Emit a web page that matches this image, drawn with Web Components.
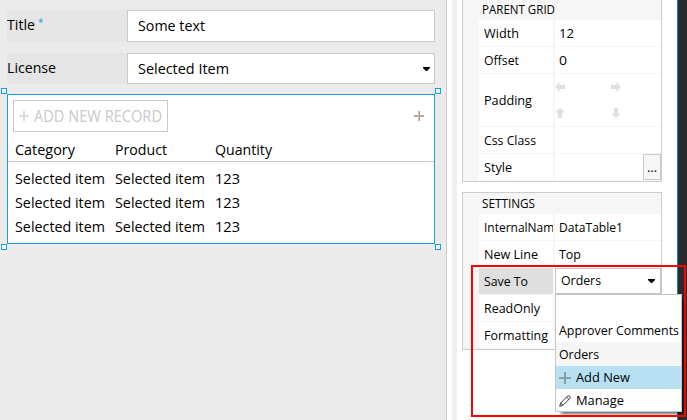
<!DOCTYPE html>
<html lang="en"><head><meta charset="utf-8"><title>Form designer</title>
<style>
html,body{margin:0;height:100%;overflow:hidden}
body{font-family:"Open Sans","Noto Sans",sans-serif;color:#000;background:#fff}
</style></head><body>
<designer-app></designer-app>
<script>
const make=(name,html,setup)=>customElements.define(name,class extends HTMLElement{
  connectedCallback(){
    if(this.shadowRoot)return;
    this.attachShadow({mode:'open'}).innerHTML=html;
    if(setup)setup(this,this.shadowRoot);
  }
});

make('ui-icon',`<style>:host{display:block;flex:none}div{display:block}svg{display:block;overflow:visible}</style><div></div>`,(el,r)=>{
  const arrow=d=>`<svg width="10" height="10" viewBox="0 0 10 10"><path transform="rotate(${d} 5 5)" fill="#dfdfdf" d="M0 5 4.5 0V3H10V7H4.5V10Z"/></svg>`;
  r.querySelector('div').innerHTML={
    caret:`<svg width="7" height="4" viewBox="0 0 7 4"><path d="M0 0H7V1L4 4H3L0 1Z"/></svg>`,
    left:arrow(0),up:arrow(90),right:arrow(180),down:arrow(270),
    plusPale:`<svg width="10" height="10"><path d="M0 5H10M5 0V10" stroke="#d2d2da" stroke-width="1.6"/></svg>`,
    plus:`<svg width="10" height="10"><path d="M0 5H10" stroke="#aaa" stroke-width="2"/><path d="M4.5 0V10" stroke="#ffb861"/><path d="M5.5 0V10" stroke="#8aa6c8"/></svg>`,
    plusMenu:`<svg width="12" height="12"><path d="M0 6H12" stroke="#71858e" stroke-width="1.4"/><path d="M5.5 0V12" stroke="#a39a83"/><path d="M6.5 0V12" stroke="#6e9fc4"/></svg>`,
    pencil:`<svg width="12" height="12" viewBox="0 0 12 12" fill="none" stroke="#3b3540" stroke-width="1"><path d="M.7 11.3 1.6 8 8.5 1.1Q9.5.2 10.7 1.2 11.8 2.4 10.9 3.4L4 10.3ZM1.6 8 4 10.3M7.5 2.1 9.9 4.4"/></svg>`
  }[el.getAttribute('name')];
});

/* Label condensed horizontally to the width in its "w" attribute */
make('fit-text',`<style>:host{display:block;flex:none;white-space:nowrap}span{display:inline-block;transform-origin:0 50%}</style><span><slot></slot></span>`,(el,r)=>{
  const s=r.querySelector('span'),w=+el.getAttribute('w');
  el.style.width=w+'px';
  s.style.transform=`scaleX(${w/s.getBoundingClientRect().width})`;
});

make('form-field',`<style>
:host{display:grid;grid-template-columns:120px 308px;height:var(--h);font-size:15px}
.l{background:#e5e5e5;display:flex;line-height:var(--ll)}
.i{box-sizing:border-box;border:1px solid #c9c9c9;background:#fff;display:flex;justify-content:space-between;align-items:center;padding:0 4px 0 10px;line-height:var(--il)}
</style><div class="l"><slot name="label"></slot></div><div class="i"><slot></slot><slot name="end"></slot></div>`);

make('data-grid',`<style>
:host{display:block;position:relative;box-sizing:border-box;height:150px;border:1px solid #16a0dc;background:#fff;font-size:15px}
.h{position:absolute;width:4px;height:4px;border:1px solid #16a0dc;background:#f4f4f4}
.bar{display:flex;justify-content:space-between;align-items:center;padding:5px 10px 0 5px}
button{all:unset;box-sizing:border-box;width:155px;height:32px;border:1px solid #c9c9c9;display:flex;align-items:center;gap:5px;padding-left:5px;color:#c9c9c9;line-height:30px;font-size:15.5px}
.r{display:grid;grid-template-columns:100px 100px 1fr;padding-left:7px;line-height:24px}
.head{height:29px;line-height:34px;border-bottom:1px solid #c9c9c9;margin-bottom:4px}
</style>
<div class="bar"><button><ui-icon name="plusPale"></ui-icon><fit-text w="128">ADD NEW RECORD</fit-text></button><ui-icon name="plus"></ui-icon></div>
<div class="r head"><fit-text w="60">Category</fit-text><fit-text w="52">Product</fit-text><fit-text w="57">Quantity</fit-text></div>
<div id="rows"></div>
<i class="h" style="left:-7px;top:-7px"></i><i class="h" style="right:-7px;top:-7px"></i><i class="h" style="left:-7px;bottom:-7px"></i><i class="h" style="right:-7px;bottom:-7px"></i>`,(el,r)=>{
  r.getElementById('rows').innerHTML='<div class="r"><fit-text w="90">Selected item</fit-text><fit-text w="90">Selected item</fit-text><fit-text w="25">123</fit-text></div>'.repeat(3);
});

make('prop-group',`<style>
:host{display:block;box-sizing:border-box;width:200px;border:1px solid #cdcdcd;background:#f6f6f6;padding-left:16px}
header{height:21px;line-height:21px;padding-left:3px;font-size:12.5px;display:flex}
</style><header><slot name="title"></slot></header><slot></slot>`);

make('prop-row',`<style>
:host{display:grid;grid-template-columns:74px 107px;column-gap:1px;height:26px;padding-bottom:1px;font-size:13px;line-height:26px}
:host([tall]){height:52px;line-height:52px}
.l{background:#fff;padding-left:5px;overflow:hidden;display:flex}
:host([active]) .l{background:#dfdfdf}
.v{background:#fff;margin-left:1px;padding-left:4px;display:flex}
:host([flush]) .v{padding-left:0}
:host([active]) .v{margin-left:0}
</style><div class="l"><slot name="label"></slot></div><div class="v"><slot></slot></div>`);

make('padding-arrows',`<style>:host{display:grid;grid-template-columns:56px 10px;row-gap:16px;padding:8px 0 0 0;align-content:start}</style>
<ui-icon name="left"></ui-icon><ui-icon name="right"></ui-icon><ui-icon name="up"></ui-icon><ui-icon name="down"></ui-icon>`);

make('more-button',`<style>:host{display:block;box-sizing:border-box;width:18px;height:26px;margin-left:88px;border:1px solid #c9c9c9;background:#f6f6f6;text-align:center;line-height:24px}</style><slot></slot>`);

make('drop-select',`<style>
:host{display:block;position:relative;width:107px;height:26px;margin-left:1px}
.box{box-sizing:border-box;width:106px;height:26px;border:1px solid #c4c4c4;background:#fff;display:flex;align-items:center;justify-content:space-between;padding:0 5px;line-height:23px}
.box fit-text{margin-top:-1px}
.menu{position:absolute;z-index:1;left:0;top:26px;width:127px;height:118px;box-sizing:border-box;border:1px solid #c6c6c6;background:#fff;box-shadow:4px 4px 3px -2px rgba(0,0,0,.6);line-height:23px}
.o{height:23px;padding-left:3px;display:flex;gap:5px;align-items:center}
.o.sel{height:24px;line-height:24px;background:#f5f5f5}.o.hot{background:#b7e0f2}
</style>
<div class="box"><fit-text w="40">Orders</fit-text><ui-icon name="caret"></ui-icon></div>
<div class="menu"><div class="o"></div><div class="o" style="height:24px"><fit-text w="120">Approver Comments</fit-text></div><div class="o sel"><fit-text w="40">Orders</fit-text></div><div class="o hot"><ui-icon name="plusMenu"></ui-icon><fit-text w="54">Add New</fit-text></div><div class="o"><ui-icon name="pencil"></ui-icon><fit-text w="48">Manage</fit-text></div></div>`);

make('designer-app',`<style>
:host{display:grid;grid-template-columns:447px 5px 5px 220px 10px;height:420px;position:relative;overflow:hidden}
.canvas{box-sizing:border-box;background:#ebebeb;border-right:1px solid #ccc;padding:10px 11px 0 7px;display:flex;flex-direction:column;gap:11px}
.split{background:#f0f0f0}
.side{padding-left:5px;display:flex;flex-direction:column;gap:10px}
.edge{background:#2b2b2b;border-left:1px solid #2277bd}
.mark{position:absolute;z-index:2;box-sizing:border-box;left:471px;top:265px;width:215px;height:152px;border:2px solid #f00}
sup{font-size:10px;color:#2b9bd8;line-height:24px;margin:0 0 0 3px}
</style>
<div class="canvas">
<form-field style="--h:32px;--ll:29px;--il:30px"><fit-text slot="label" w="28">Title</fit-text><sup slot="label">*</sup><fit-text w="67" style="margin-top:-2px">Some text</fit-text></form-field>
<form-field style="--h:30px;--ll:29px;--il:30px"><fit-text slot="label" w="49">License</fit-text><fit-text w="91" style="margin-top:-1px">Selected Item</fit-text><ui-icon slot="end" name="caret"></ui-icon></form-field>
<data-grid></data-grid>
</div>
<div></div><div class="split"></div>
<div class="side">
<prop-group style="margin-top:-2px"><fit-text slot="title" w="73">PARENT GRID</fit-text>
<prop-row><fit-text slot="label" w="35">Width</fit-text><fit-text w="15">12</fit-text></prop-row>
<prop-row><fit-text slot="label" w="35">Offset</fit-text><fit-text w="8">0</fit-text></prop-row>
<prop-row tall flush><fit-text slot="label" w="48">Padding</fit-text><padding-arrows></padding-arrows></prop-row>
<prop-row><fit-text slot="label" w="52">Css Class</fit-text></prop-row>
<prop-row flush><fit-text slot="label" w="28">Style</fit-text><more-button>...</more-button></prop-row>
</prop-group>
<prop-group><fit-text slot="title" w="53">SETTINGS</fit-text>
<prop-row><fit-text slot="label" w="77">InternalName</fit-text><fit-text w="64">DataTable1</fit-text></prop-row>
<prop-row><fit-text slot="label" w="54">New Line</fit-text><fit-text w="22">Top</fit-text></prop-row>
<prop-row active flush><fit-text slot="label" w="44">Save To</fit-text><drop-select></drop-select></prop-row>
<prop-row><fit-text slot="label" w="56">ReadOnly</fit-text></prop-row>
<prop-row><fit-text slot="label" w="64">Formatting</fit-text></prop-row>
</prop-group>
</div>
<div class="edge"></div>
<div class="mark"></div>`);
</script></body></html>
